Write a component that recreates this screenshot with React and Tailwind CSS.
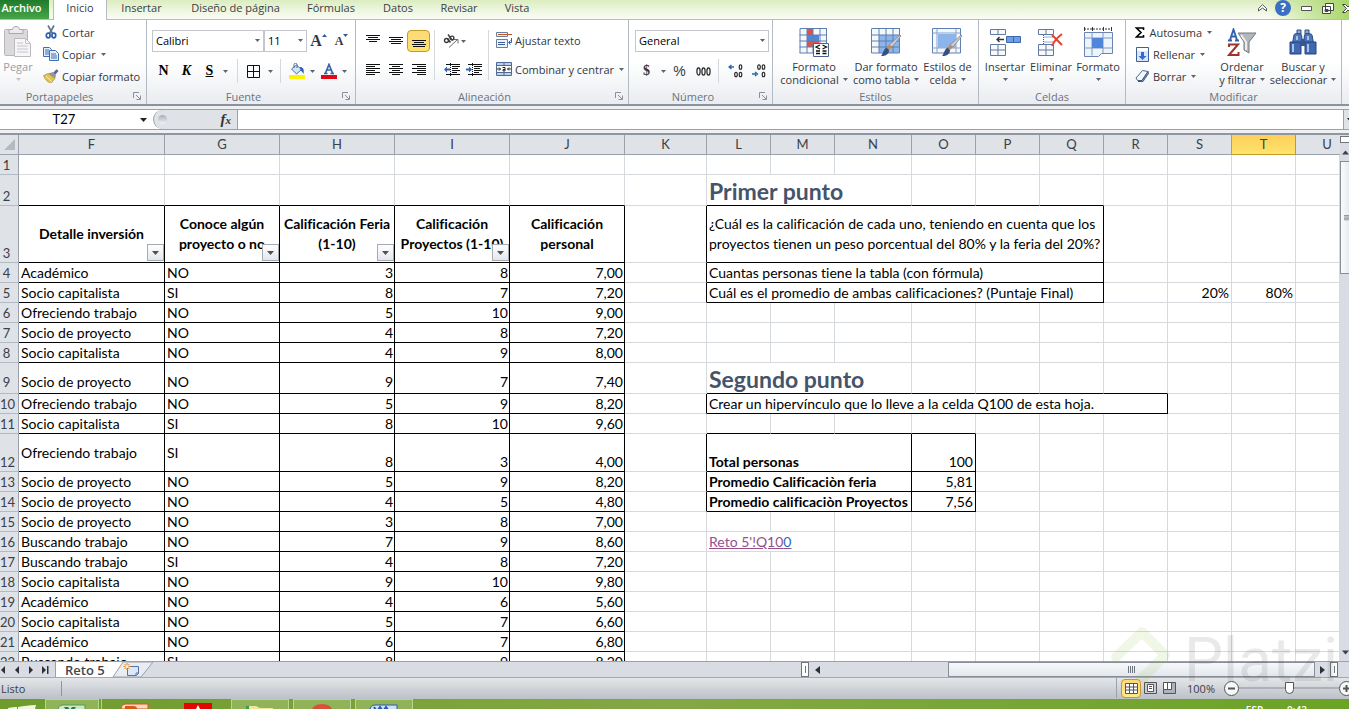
import React from "react";

/* ---------- small shared pieces ---------- */

function Caret({ dark, pale }) {
  return (
    <svg className="block shrink-0" width="5" height="3" viewBox="0 0 5 3">
      <path d="M0 0h5L2.5 3z" fill={dark ? "#1f2329" : pale ? "#c3c5c9" : "#5d646d"} />
    </svg>
  );
}

function Sep() {
  return <span className="h-6 w-px shrink-0 bg-[#d5d8dd]" />;
}

function Launcher({ name }) {
  return (
    <button aria-label={name} className="flex h-3 w-3 items-center justify-center">
      <svg width="8" height="8" viewBox="0 0 8 8" fill="none" stroke="#8a909a">
        <path d="M.5 6V.5H6M3 3l4 4M7.5 3.5v4h-4" />
      </svg>
    </button>
  );
}

function Group({ label, launcher, width, labelPad = "", children }) {
  return (
    <section className={`flex shrink-0 flex-col border-r border-[#b4bac3] ${width}`}>
      <div className="flex h-[69px] w-full">{children}</div>
      <div className={`flex h-4 items-center ${launcher ? "pr-[3px]" : ""}`}>
        <span className={`flex-1 text-center text-[#6a7380] ${labelPad}`}>{label}</span>
        {launcher && <Launcher name={`Opciones de ${label}`} />}
      </div>
    </section>
  );
}

function Tool({ name, width = "w-[23px]", active, children }) {
  return (
    <button
      aria-label={name}
      className={`flex h-[22px] shrink-0 items-center justify-center ${width} ${
        active ? "rounded-sm border border-[#c29b29] bg-linear-to-b from-[#fdd978] to-[#ffe26a]" : ""
      }`}
    >
      {children}
    </button>
  );
}

function BigButton({ icon, lines, width, below, muted }) {
  return (
    <button className={`flex shrink-0 flex-col items-center pt-1 ${width} ${muted ? "text-[#9a9ea4]" : ""}`}>
      <span className="flex h-9 items-center">{icon}</span>
      <span className="block h-[13px] leading-[13px] whitespace-nowrap">{lines[0]}</span>
      <span className="flex h-[13px] items-center gap-1 leading-[13px] whitespace-nowrap">
        {!below && lines[1]}
        <Caret pale={muted} />
      </span>
    </button>
  );
}

function SmallButton({ icon, label, caret }) {
  return (
    <button className="flex h-[22px] items-center gap-[3px] pb-[2px] whitespace-nowrap">
      <span className="flex w-4 justify-center">{icon}</span>
      {label}
      {caret && <span className="pl-[2px]"><Caret /></span>}
    </button>
  );
}

function Combo({ label, options, width }) {
  return (
    <span className={`relative flex h-[22px] shrink-0 ${width}`}>
      <select
        aria-label={label}
        className="h-full w-full appearance-none border border-[#c3c7cd] bg-white pr-3 pb-[2px] pl-[3px] text-black outline-none"
      >
        {options.map((o) => (
          <option key={o}>{o}</option>
        ))}
      </select>
      <span className="pointer-events-none absolute top-[9px] right-1">
        <Caret />
      </span>
    </span>
  );
}

/* ---------- ribbon icons ---------- */

const PasteIcon = () => (
  <svg width="28" height="32" viewBox="0 0 28 32">
    <rect x=".5" y="3.5" width="23" height="26" rx="1" fill="#dcd9dd" stroke="#b9b6bb" />
    <path d="M5 3.5h3.5c0-4 7-4 7 0H19v4H5z" fill="#eceaed" stroke="#a9a7ac" />
    <path d="M10.500 12.500h11l5 5v13h-16z" fill="#f6f5f7" stroke="#bcbabf" />
    <path d="M21.500 12.500v5h5M13 17h6M13 20h11M13 23h11M13 26h11" fill="none" stroke="#c6c4c9" />
  </svg>
);
const CutIcon = () => (
  <svg width="12" height="14" viewBox="0 0 12 14" fill="none">
    <path d="M3 .5 7.500 8.500M9 .5 4.500 8.500" stroke="#61748f" strokeWidth="1.600" />
    <ellipse cx="3.200" cy="10.500" rx="1.900" ry="2.300" stroke="#2a5cb0" strokeWidth="1.700" />
    <ellipse cx="8.800" cy="10.500" rx="1.900" ry="2.300" stroke="#2a5cb0" strokeWidth="1.700" />
  </svg>
);
const CopyIcon = () => (
  <svg width="16" height="14" viewBox="0 0 16 14" stroke="#3f6db0">
    <path d="M.5.5h6l2 2v7h-8z" fill="#e4effb" />
    <path d="M2 3h4M2 5h4M2 7h4" />
    <path d="M6.500 3.500h6l3 3v7h-9z" fill="#e4effb" />
    <path d="M8 7h5M8 9h6M8 11h6" />
  </svg>
);
const BrushIcon = () => (
  <svg width="16" height="14" viewBox="0 0 16 14">
    <path d="m10 4 3.500-3.800 2 1.800L12 6z" fill="#6d5a96" />
    <path d="m5 4.500 5-1.500 3 3.500-1 3z" fill="#8d97a6" />
    <path d="M.5 6.500 5 4.500l7 5-3.500 4.200c-3 .3-6-2.200-8-7.200z" fill="#e6c34f" stroke="#a98522" strokeWidth=".6" />
    <path d="M3 7.500c2 1 4 3 5 5" stroke="#fbeeb4" fill="none" />
  </svg>
);
const BordersIcon = () => (
  <svg width="13" height="13" viewBox="0 0 13 13" fill="none" stroke="#111">
    <path d="M.5.5h12v12H.5zM6.500.5v12M.5 6.500h12" />
  </svg>
);
const BucketIcon = () => (
  <svg width="16" height="16" viewBox="0 0 16 16">
    <rect y="12" width="16" height="4" fill="#fff200" />
    <path d="m2.500 6 5-4 5 4.500-5 4.500z" fill="#d4e4f5" stroke="#4a6fa5" />
    <path d="M5 5V1.500C5-.2 8-.2 8 1.500V5" fill="none" stroke="#556a88" />
    <path d="M11 4c3 0 4.500 2.500 3.500 7-1-2-2-3-3-3.500z" fill="#2f62b3" />
  </svg>
);
const FontColorIcon = () => (
  <svg width="16" height="16" viewBox="0 0 16 16">
    <rect y="12" width="16" height="4" fill="#e30613" />
    <path d="M3 10.500h3.500M9.500 10.500H13M4.500 10 8 1.500l3.500 8.500M6 7h4.500" fill="none" stroke="#3a62a8" strokeWidth="1.700" />
  </svg>
);

function Lines({ rows }) {
  return (
    <svg width="14" height="14" viewBox="0 0 14 14" stroke="#111" fill="none">
      <path d={rows} />
    </svg>
  );
}
const TOP = "M0 1.500h14M2 3.500h10M0 5.500h14M3 7.500h8";
const MID = "M0 3.500h14M2 5.500h10M0 7.500h14M2 9.500h10";
const BOT = "M0 6.500h14M2 8.500h10M0 10.500h14M1 12.500h12";
const LEFT = "M0 1.500h14M0 3.500h9M0 5.500h14M0 7.500h9M0 9.500h14M0 11.500h9";
const CENTER = "M0 1.500h14M3 3.500h8M0 5.500h14M3 7.500h8M0 9.500h14M3 11.500h8";
const RIGHT = "M0 1.500h14M5 3.500h9M0 5.500h14M5 7.500h9M0 9.500h14M5 11.500h9";

const AngleIcon = () => (
  <svg width="16" height="14" viewBox="0 0 16 14" fill="none" stroke="#3a3a3a">
    <circle cx="3.500" cy="6.500" r="2" strokeWidth="1.400" />
    <path d="m4.500 4.500 3 4M5 .5l4.500 6" strokeWidth="1.400" />
    <circle cx="9" cy="4" r="1.900" strokeWidth="1.400" />
    <path d="m6 13.500 8-7.500M15 9.500V5.500h-4" stroke="#6c6c6c" />
  </svg>
);
function IndentIcon({ inward }) {
  return (
    <svg width="16" height="14" viewBox="0 0 16 14" fill="none">
      <path d="M2 1.500h14M8 3.500h8M8 5.500h6M8 7.500h8M8 9.500h5M2 11.500h14" stroke="#111" />
      <path d="M6.500 0v14" stroke="#111" strokeDasharray="1 1" />
      <path d={inward ? "M0 5.500h3v-2l3 3-3 3v-2H0z" : "M6 5.500H3v-2l-3 3 3 3v-2h3z"} fill="#2f62b3" />
    </svg>
  );
}
const WrapIcon = () => (
  <svg width="16" height="16" viewBox="0 0 16 16" fill="none">
    <path d="M.5.500h11v4H.5zM.5 7.500h11v8H.5z" fill="#eaf1fa" stroke="#6b7f9b" />
    <path d="M2 2.500h14" stroke="#c0562d" />
    <path d="M2 10.500h7M2 12.500h7" stroke="#3d5f96" />
    <path d="M15.500 6v4.500H13M14.500 8.500l-2 2 2 2" stroke="#2f62b3" />
  </svg>
);
const MergeIcon = () => (
  <svg width="16" height="14" viewBox="0 0 16 14" fill="none">
    <path d="M.5.500h15v13H.5z" fill="#b9d0ee" stroke="#4d6a96" />
    <path d="M.5 3.500h15M.5 10.500h15M8 .5v3M8 10.500v3" stroke="#4d6a96" />
    <path d="M1 4h14v6H1z" fill="#fff" />
    <path d="M1 7h3.500M3 5.500 4.500 7 3 8.500M15 7h-3.500M13 5.500 11.500 7 13 8.500" stroke="#222" />
    <path d="M6.500 5.500h2.500V9H7V7.500h2" stroke="#222" />
  </svg>
);

function DecimalIcon({ less }) {
  const arrow = less ? "M1 10h4M4 8l2.500 2L4 12" : "M6 3H2M3.500 1 1 3l2.500 2";
  const zeros = less ? [[8, 3], [12.5, 3], [12.5, 10.5]] : [[12.5, 3], [8, 10.5], [12.5, 10.5]];
  return (
    <svg width="16" height="14" viewBox="0 0 16 14" fill="none">
      <path d={arrow} stroke="#2f62b3" strokeWidth="1.400" />
      {zeros.map(([x, y]) => (
        <ellipse key={`${x}-${y}`} cx={x} cy={y} rx="1.300" ry="2.300" stroke="#222" strokeWidth="1.100" />
      ))}
    </svg>
  );
}

const BrushOverlay = () => (
  <g>
    <path d="m30 8-9 11-3-2L29 7z" fill="#c9cdd4" stroke="#777e8a" strokeWidth=".7" />
    <path d="m21 19-3 3-2.500-2.500L18 17z" fill="#c98b4a" />
    <path d="M18 22c0 4-3 6-8 6 2-2 2-6 5.500-8.500z" fill="#34527f" />
  </g>
);
const CondIcon = () => (
  <svg width="30" height="29" viewBox="0 0 30 29" fill="none">
    <path d="M1 1h27v24H1z" fill="#f4f8fd" />
    <path d="M8 1h6v12H8zM8 13h12v6H8z" fill="#e0513f" />
    <path d="M8 7h12v6H8z" fill="#4f86dc" />
    <path d="M1 .5h27M.5 7h27M.5 13h27M.5 19h27M.5 25h27M1 .5V25M8 .5V25M14 .5V25M21 .5V25M27.500.5V25" stroke="#5f7fb0" />
    <path d="M14.500 15.500h15v13h-15z" fill="#fff" stroke="#4b638c" />
    <path d="m21 17-4 2 4 2M17 23h4M17 25.500h4M23.500 17l4 2-4 2M23.500 23h4M23.500 25.500h4" stroke="#111" strokeWidth="1.300" />
  </svg>
);
const TableIcon = () => (
  <svg width="31" height="29" viewBox="0 0 31 29" fill="none">
    <path d="M1 1h28v24H1z" fill="#f4f8fd" />
    <path d="M8 7h21v18H8z" fill="#8db5ec" />
    <path d="M1 .5h28M.5 7h28M.5 13h28M.5 19h28M.5 25h28M.5.5V25M8 .5V25M15 .5V25M22 .5V25M28.500.5V25" stroke="#5f7fb0" />
    <BrushOverlay />
  </svg>
);
const StylesIcon = () => (
  <svg width="31" height="29" viewBox="0 0 31 29" fill="none">
    <path d="M.5.5h28V25H.5z" fill="#f4f8fd" stroke="#5f7fb0" />
    <path d="M5 .5V25M24 .5V25M.5 5h28M.5 20h28" stroke="#8aa3c8" />
    <path d="M6 6h18v14H6z" fill="#8db5ec" />
    <BrushOverlay />
  </svg>
);
const InsertIcon = () => (
  <svg width="31" height="27" viewBox="0 0 31 27" fill="none" stroke="#62789c">
    <path d="M.5.500h15v5H.5zM8 .5v5M.5 15.500h15v11H.5zM8 15.500v11M.5 21h15" fill="#f6f9fd" />
    <path d="M16.500 7.500h14v6h-14zM23.500 7.500v6" fill="#6d9fe6" stroke="#3f67ab" />
    <path d="M7 10.500h7M9.500 8 7 10.500 9.500 13" stroke="#333" strokeWidth="1.300" />
  </svg>
);
const DeleteIcon = () => (
  <svg width="26" height="27" viewBox="0 0 26 27" fill="none" stroke="#62789c">
    <path d="M.5.500h15v5H.5zM8 .5v5M.5 15.500h15v11H.5zM8 15.500v11M.5 21h15" fill="#f6f9fd" />
    <path d="M5.500 6v9M15.500 8H6M15.500 13H6" stroke="#3457a3" strokeDasharray="1 1" />
    <path d="m14 6 10 10M24 5C20 8 16 12 14 17" stroke="#e0442e" strokeWidth="2" />
  </svg>
);
const FormatIcon = () => (
  <svg width="31" height="30" viewBox="0 0 31 30" fill="none">
    <path d="M1 2h27" stroke="#333" strokeDasharray="2 1" />
    <path d="M1.500 0v4M9.500 0v4M20.500 0v4M28.500 0v4" stroke="#333" />
    <path d="M1.500 5.500h28v21h-11l-3 3h-14z" fill="#eef4fc" stroke="#6a85b2" />
    <path d="M9 5.500v23M20 5.500v21M1.500 11h28M1.500 21h28" stroke="#7f98c2" />
    <path d="M9 11h11v10H9z" fill="#4f86dc" />
  </svg>
);
const SigmaIcon = () => (
  <svg width="10" height="11" viewBox="0 0 10 11" fill="none" stroke="#000" strokeWidth="1.600">
    <path d="M8.500 3V1H1.500L6 5.500 1.500 10h7V8" />
  </svg>
);
const FillIcon = () => (
  <svg width="13" height="15" viewBox="0 0 13 15">
    <path d="M.5.500h12v14H.5z" fill="#d7e6fa" stroke="#3f5f96" />
    <path d="M1 1h11v3H1z" fill="#fff" />
    <path d="M5 5h3v4h2.500l-4 4-4-4H5z" fill="#2f6bd0" />
  </svg>
);
const EraserIcon = () => (
  <svg width="15" height="12" viewBox="0 0 15 12">
    <path d="m1 8 6.500-7.500 5.500 1L7 10.500H2.500z" fill="#f2f6fc" stroke="#4f6691" />
    <path d="m13 1.500.5 2L8 11.500H3l4-1z" fill="#7792c0" stroke="#34496e" strokeWidth=".8" />
  </svg>
);
const SortIcon = () => (
  <svg width="30" height="29" viewBox="0 0 30 29" fill="none">
    <path d="M11 5h18l-7 9v11l-5-3v-8z" fill="#b4b7bb" stroke="#74777b" />
    <path d="m14 7 5 7v8" stroke="#eceded" strokeWidth="2" />
    <path d="M1 12.500h4M8 12.500h4M3 12 6.500 1.500 10 12M4 8.500h5" stroke="#2f62b3" strokeWidth="1.900" />
    <path d="M2 19v-2.500h9L2 27h9.500v-3" stroke="#a0322c" strokeWidth="2" />
  </svg>
);
const FindIcon = () => (
  <svg width="28" height="26" viewBox="0 0 28 26">
    <path d="M8 1h4v4H8zM16 1h4v4h-4z" fill="#8fa9d4" stroke="#304f86" />
    <path d="M5 6c0-2 7-2 7.500 0l1 8h-10zM15.500 6c.5-2 7-2 7.500 0l1.500 8h-10z" fill="#4f76ba" stroke="#2b4a84" />
    <path d="M1 13h11v12H1zM16 13h11v12H16z" fill="#3f68b0" stroke="#25437c" />
    <path d="M12 10h4v7h-4z" fill="#37598f" />
    <path d="M4 15v8M19 15v8M8 7v4M19 7v4" stroke="#a9c2ea" strokeWidth="2" />
  </svg>
);

/* ---------- ribbon ---------- */

const TABS = [
  ["Insertar", "w-[69px]"],
  ["Diseño de página", "w-[119px]"],
  ["Fórmulas", "w-[72px]"],
  ["Datos", "w-[62px]"],
  ["Revisar", "w-[60px]"],
  ["Vista", "w-[56px]"],
];

function TabBar() {
  return (
    <nav className="flex h-5 shrink-0 border-b border-[#b7bcc2] bg-linear-to-b from-[#dcedc0] to-[#fbfdf6] text-[#3b4047]">
      <button className="h-[19px] w-[49px] shrink-0 bg-linear-to-b from-[#1f7a2c] to-[#46a648] pr-[6px] pb-1 font-semibold text-white">
        Archivo
      </button>
      <button className="ml-1 h-5 w-[54px] shrink-0 border-x border-[#b7bcc2] bg-white pb-[5px]">Inicio</button>
      {TABS.map(([t, w]) => (
        <button key={t} className={`shrink-0 pb-1 whitespace-nowrap ${w}`}>
          {t}
        </button>
      ))}
      <span className="flex flex-1 items-center justify-end gap-2 bg-linear-to-l from-[#a8d66a] to-transparent to-10% pb-[3px]">
        <button aria-label="Minimizar la cinta">
          <svg width="9" height="8" viewBox="0 0 9 8" fill="none" stroke="#555">
            <path d="M.5 4.500 4.500.7l4 3.800v2.500L4.500 4 .5 7z" fill="#fff" />
          </svg>
        </button>
        <button
          aria-label="Ayuda"
          className="flex h-4 w-4 items-center justify-center rounded-full bg-[#3c6fc4] text-xs font-bold text-white"
        >
          ?
        </button>
        <button aria-label="Minimizar" className="ml-[2px]">
          <svg width="11" height="5" viewBox="0 0 11 5"><path d="M.5.500h10v4H.5z" fill="#fff" stroke="#555" /></svg>
        </button>
        <button aria-label="Restaurar" className="ml-[2px]">
          <svg width="12" height="11" viewBox="0 0 12 11" fill="#fff" stroke="#444">
            <path d="M3.500.500h8v7h-8zM.5 3.500h8v7h-8zM3 6.500h3v2H3z" />
          </svg>
        </button>
        <button aria-label="Cerrar" className="w-[7px] overflow-hidden">
          <svg className="max-w-none" width="12" height="9" viewBox="0 0 12 9" fill="#fff" stroke="#444">
            <path d="M.5.500h3l2.500 2.500L8.500.500h3l-4 4 4 4h-3L6 6 3.500 8.500h-3l4-4z" />
          </svg>
        </button>
      </span>
    </nav>
  );
}

function Ribbon() {
  return (
    <div className="flex h-[86px] shrink-0 overflow-hidden border-b-2 border-[#8b929c] bg-linear-to-b from-white from-50% to-[#e9ecf0] text-[#34383e]">
      <Group label="Portapapeles" launcher width="w-[147px]" labelPad="pr-3">
        <BigButton icon={<PasteIcon />} lines={["Pegar"]} below muted width="w-9" />
        <div className="flex flex-col pt-[2px] pl-[7px]">
          <SmallButton icon={<CutIcon />} label="Cortar" />
          <SmallButton icon={<CopyIcon />} label="Copiar" caret />
          <SmallButton icon={<BrushIcon />} label="Copiar formato" />
        </div>
      </Group>

      <Group label="Fuente" launcher width="w-[209px]">
        <div className="flex w-full flex-col gap-[7px] pt-[10px] pl-[5px]">
          <div className="flex">
            <Combo label="Fuente" options={["Calibri", "Arial", "Cambria"]} width="w-[112px]" />
            <Combo label="Tamaño de fuente" options={["11", "12", "14"]} width="w-[43px]" />
            <Tool name="Aumentar tamaño">
              <span className="font-['Liberation_Serif',serif] text-base leading-none font-bold">A</span>
              <svg className="mb-3" width="5" height="3" viewBox="0 0 5 3"><path d="M0 3h5L2.500 0z" fill="#2f5b9c" /></svg>
            </Tool>
            <Tool name="Disminuir tamaño">
              <span className="font-['Liberation_Serif',serif] text-xs leading-none font-bold">A</span>
              <svg className="mb-3" width="5" height="3" viewBox="0 0 5 3"><path d="M0 0h5L2.500 3z" fill="#2f5b9c" /></svg>
            </Tool>
          </div>
          <div className="flex items-center font-['Liberation_Serif',serif] text-sm font-bold text-black">
            <Tool name="Negrita">N</Tool>
            <Tool name="Cursiva"><i>K</i></Tool>
            <Tool name="Subrayado"><u>S</u></Tool>
            <Tool name="Más subrayados" width="w-2"><Caret /></Tool>
            <span className="w-2" />
            <Sep />
            <span className="w-1" />
            <Tool name="Bordes"><BordersIcon /></Tool>
            <Tool name="Más bordes" width="w-[10px]"><Caret /></Tool>
            <span className="w-[5px]" />
            <Sep />
            <span className="w-1" />
            <Tool name="Color de relleno"><BucketIcon /></Tool>
            <Tool name="Más rellenos" width="w-[9px]"><Caret /></Tool>
            <Tool name="Color de fuente"><FontColorIcon /></Tool>
            <Tool name="Más colores" width="w-[9px]"><Caret /></Tool>
          </div>
        </div>
      </Group>

      <Group label="Alineación" launcher width="w-[273px]">
        <div className="flex gap-1 pt-[10px] pl-[5px]">
          <div className="flex flex-col gap-[7px]">
            <div className="flex">
              <Tool name="Alinear arriba"><Lines rows={TOP} /></Tool>
              <Tool name="Alinear en medio"><Lines rows={MID} /></Tool>
              <Tool name="Alinear abajo" active><Lines rows={BOT} /></Tool>
            </div>
            <div className="flex">
              <Tool name="Izquierda"><Lines rows={LEFT} /></Tool>
              <Tool name="Centrar"><Lines rows={CENTER} /></Tool>
              <Tool name="Derecha"><Lines rows={RIGHT} /></Tool>
            </div>
          </div>
          <span className="h-[50px] w-px bg-[#d5d8dd]" />
          <div className="flex w-[45px] flex-col gap-[7px] pl-1">
            <button aria-label="Orientación" className="flex h-[22px] items-center gap-[2px]">
              <AngleIcon />
              <Caret />
            </button>
            <div className="flex gap-[5px]">
              <Tool name="Disminuir sangría" width="w-[17px]"><IndentIcon /></Tool>
              <Tool name="Aumentar sangría" width="w-[17px]"><IndentIcon inward /></Tool>
            </div>
          </div>
          <span className="h-[50px] w-px bg-[#d5d8dd]" />
          <div className="flex flex-col gap-[7px] pl-[3px]">
            <SmallButton icon={<WrapIcon />} label="Ajustar texto" />
            <SmallButton icon={<MergeIcon />} label="Combinar y centrar" caret />
          </div>
        </div>
      </Group>

      <Group label="Número" launcher width="w-[144px]">
        <div className="flex w-full flex-col gap-[7px] pt-[10px] pl-[6px]">
          <Combo label="Formato de número" options={["General", "Número", "Moneda"]} width="w-[134px]" />
          <div className="flex items-center">
            <Tool name="Moneda"><b className="font-['Liberation_Serif',serif] text-sm">$</b></Tool>
            <Tool name="Más monedas" width="w-[10px]"><Caret /></Tool>
            <Tool name="Porcentaje"><span className="font-['Liberation_Sans',sans-serif] text-sm">%</span></Tool>
            <Tool name="Millares" width="w-6">
              <svg width="15" height="9" viewBox="0 0 15 9" fill="none" stroke="#222" strokeWidth="1.200">
                <ellipse cx="2.500" cy="4.500" rx="1.600" ry="3.600" />
                <ellipse cx="7.500" cy="4.500" rx="1.600" ry="3.600" />
                <ellipse cx="12.500" cy="4.500" rx="1.600" ry="3.600" />
              </svg>
            </Tool>
            <span className="w-[3px]" />
            <Sep />
            <span className="w-[5px]" />
            <Tool name="Aumentar decimales"><DecimalIcon /></Tool>
            <Tool name="Disminuir decimales"><DecimalIcon less /></Tool>
          </div>
        </div>
      </Group>

      <Group label="Estilos" width="w-[206px]">
        <BigButton icon={<CondIcon />} lines={["Formato", "condicional"]} width="w-[82px]" />
        <BigButton icon={<TableIcon />} lines={["Dar formato", "como tabla"]} width="w-[62px]" />
        <BigButton icon={<StylesIcon />} lines={["Estilos de", "celda"]} width="w-[61px]" />
      </Group>

      <Group label="Celdas" width="w-[147px]">
        <BigButton icon={<InsertIcon />} lines={["Insertar"]} below width="w-[52px]" />
        <BigButton icon={<DeleteIcon />} lines={["Eliminar"]} below width="w-[40px]" />
        <BigButton icon={<FormatIcon />} lines={["Formato"]} below width="w-[54px]" />
      </Group>

      <Group label="Modificar" width="w-[216px]">
        <div className="flex w-[86px] shrink-0 flex-col pt-[2px] pl-2">
          <SmallButton icon={<SigmaIcon />} label="Autosuma" caret />
          <SmallButton icon={<FillIcon />} label="Rellenar" caret />
          <SmallButton icon={<EraserIcon />} label="Borrar" caret />
        </div>
        <BigButton icon={<SortIcon />} lines={["Ordenar", "y filtrar"]} width="w-[60px]" />
        <BigButton icon={<FindIcon />} lines={["Buscar y", "seleccionar"]} width="w-[62px]" />
      </Group>
    </div>
  );
}

function FormulaBar() {
  return (
    <div className="flex h-[29px] shrink-0 border-b-2 border-[#8f969f] bg-[#eef0f3] pt-[3px] pb-[3px]">
      <div className="flex w-full border-y border-[#9aa1aa] bg-white">
        <label className="flex w-[153px] shrink-0 items-center">
          <input
            aria-label="Cuadro de nombres"
            defaultValue="T27"
            className="w-[128px] bg-transparent text-center font-['Lato',sans-serif] text-[13px] text-black outline-none"
          />
          <svg className="ml-3" width="7" height="4" viewBox="0 0 7 4"><path d="M0 0h7L3.500 4z" fill="#222" /></svg>
        </label>
        <div className="flex w-[85px] shrink-0 items-center justify-between rounded-l-full border-r border-l border-[#9aa1aa] bg-[#dfe2e7] pr-[6px] pl-1">
          <span className="h-[9px] w-[9px] rounded-full bg-linear-to-b from-[#a9afb7] to-[#f2f4f6]" />
          <button aria-label="Insertar función" className="font-['Liberation_Serif',serif] text-[15px] leading-none font-bold text-[#333] italic">
            f<span className="text-[11px]">x</span>
          </button>
        </div>
        <input aria-label="Barra de fórmulas" className="min-w-0 flex-1 bg-white px-1 outline-none" />
        <button aria-label="Expandir" className="flex w-[6px] shrink-0 items-center overflow-hidden border-l border-[#9aa1aa] bg-[#dfe2e7] pl-[3px]">
          <Caret dark />
        </button>
      </div>
    </div>
  );
}

/* ---------- sheet ---------- */

const COLS = [
  ["F", "w-[146px]"],
  ["G", "w-[115px]"],
  ["H", "w-[115px]"],
  ["I", "w-[115px]"],
  ["J", "w-[115px]"],
  ["K", "w-[82px]"],
  ["L", "w-[64px]"],
  ["M", "w-[64px]"],
  ["N", "w-[77px]"],
  ["O", "w-[64px]"],
  ["P", "w-[64px]"],
  ["Q", "w-[64px]"],
  ["R", "w-[64px]"],
  ["S", "w-[64px]"],
  ["T", "w-[64px]"],
  ["U", ""],
];
const ORDER = COLS.map(([c]) => c);

const PEOPLE = {
  4: ["Académico", "NO", "3", "8", "7,00"],
  5: ["Socio capitalista", "SI", "8", "7", "7,20"],
  6: ["Ofreciendo trabajo", "NO", "5", "10", "9,00"],
  7: ["Socio de proyecto", "NO", "4", "8", "7,20"],
  8: ["Socio capitalista", "NO", "4", "9", "8,00"],
  9: ["Socio de proyecto", "NO", "9", "7", "7,40"],
  10: ["Ofreciendo trabajo", "NO", "5", "9", "8,20"],
  11: ["Socio capitalista", "SI", "8", "10", "9,60"],
  12: ["Ofreciendo trabajo", "SI", "8", "3", "4,00"],
  13: ["Socio de proyecto", "NO", "5", "9", "8,20"],
  14: ["Socio de proyecto", "NO", "4", "5", "4,80"],
  15: ["Socio de proyecto", "NO", "3", "8", "7,00"],
  16: ["Buscando trabajo", "NO", "7", "9", "8,60"],
  17: ["Buscando trabajo", "SI", "4", "8", "7,20"],
  18: ["Socio capitalista", "NO", "9", "10", "9,80"],
  19: ["Académico", "NO", "4", "6", "5,60"],
  20: ["Socio capitalista", "NO", "5", "7", "6,60"],
  21: ["Académico", "NO", "6", "7", "6,80"],
  22: ["Buscando trabajo", "SI", "8", "9", "8,20"],
};

const HEADERS = {
  F: ["Detalle inversión"],
  G: ["Conoce algún", "proyecto o no"],
  H: ["Calificación Feria", "(1-10)"],
  I: ["Calificación", "Proyectos (1-10)"],
  J: ["Calificación", "personal"],
};

/* Cells on the right side of the sheet; span = columns covered, box = black outline. */
const NOTES = {
  2: { L: { span: 3, title: true, text: "Primer punto" } },
  3: {
    L: {
      span: 6,
      box: true,
      wrap: true,
      text: "¿Cuál es la calificación de cada uno, teniendo en cuenta que los proyectos tienen un peso porcentual del 80% y la feria del 20%?",
    },
  },
  4: { L: { span: 6, box: true, text: "Cuantas personas tiene la tabla (con fórmula)" } },
  5: {
    L: { span: 6, box: true, text: "Cuál es el promedio de ambas calificaciones? (Puntaje Final)" },
    S: { right: true, text: "20%" },
    T: { right: true, text: "80%" },
  },
  9: { L: { span: 3, title: true, text: "Segundo punto" } },
  10: { L: { span: 7, box: true, text: "Crear un hipervínculo que lo lleve a la celda Q100 de esta hoja." } },
  12: { L: { span: 3, box: true, bold: true, text: "Total personas" }, O: { box: true, right: true, text: "100" } },
  13: { L: { span: 3, box: true, bold: true, text: "Promedio Calificaciòn feria" }, O: { box: true, right: true, text: "5,81" } },
  14: { L: { span: 3, box: true, bold: true, text: "Promedio calificaciòn Proyectos" }, O: { box: true, right: true, text: "7,56" } },
  16: { L: { span: 2, link: true, text: "Reto 5'!Q100" } },
};

const HEIGHTS = { 2: "h-[31px]", 3: "h-[57px]", 9: "h-[31px]", 12: "h-[38px]" };
const ROWS = Array.from({ length: 22 }, (_, i) => i + 1);

const spanCovers = (row, col) => {
  const notes = NOTES[row] || {};
  return Object.entries(notes).some(([start, n]) => {
    const s = ORDER.indexOf(start);
    const i = ORDER.indexOf(col);
    return n.box && i >= s && i < s + (n.span || 1);
  });
};

function FilterButton({ col }) {
  return (
    <button
      aria-label={`Filtrar columna ${col}`}
      className="absolute right-0 bottom-px flex h-[17px] w-[17px] items-center justify-center border border-[#a6abb2] bg-linear-to-b from-white to-[#e3e7ec]"
    >
      <svg width="7" height="4" viewBox="0 0 7 4"><path d="M0 0h7L3.500 4z" fill="#4c5158" /></svg>
    </button>
  );
}

function NoteText({ note }) {
  if (note.title) return <h2 className="text-[23px] leading-7 font-bold text-[#44546a]">{note.text}</h2>;
  if (note.link)
    return (
      <a href="#Q100" className="text-[#954f8b] underline">
        {note.text.slice(0, -1)}
        <span className="text-[#1f6fb5]">{note.text.slice(-1)}</span>
      </a>
    );
  return note.text;
}

function SheetRow({ n }) {
  const notes = NOTES[n] || {};
  const lift = n === 9 ? "pb-[2px]" : "";
  const cells = [];
  for (let i = 0; i < ORDER.length; i++) {
    const col = ORDER[i];
    if (i < 5) {
      if (n < 3) {
        cells.push(
          <td key={col} className={`border-r border-b border-r-[#d6d9de] ${n === 2 ? "border-b-black" : "border-b-[#d6d9de]"}`} />
        );
      } else if (n === 3) {
        cells.push(
          <th key={col} scope="col" className="relative border-r border-b border-black p-0 align-middle leading-5 font-bold whitespace-nowrap">
            {HEADERS[col].map((t) => (
              <span key={t} className="block">{t}</span>
            ))}
            {i < 4 && <FilterButton col={col} />}
          </th>
        );
      } else {
        cells.push(
          <td
            key={col}
            className={`border-r border-b border-black py-0 pl-[2px] leading-[18px] ${lift} ${
              i > 1 ? "pr-px text-right align-bottom" : n === 12 ? "pr-[2px] align-middle" : "pr-[2px] align-bottom"
            }`}
          >
            {PEOPLE[n][i]}
          </td>
        );
      }
      continue;
    }
    const note = notes[col];
    const span = note?.span || 1;
    const last = ORDER[i + span - 1];
    const next = ORDER[i + span];
    const blackRight = note?.box || (next && notes[next]?.box);
    const blackBottom = note?.box || spanCovers(n + 1, col);
    cells.push(
      <td
        key={`${col}-${last}`}
        colSpan={span}
        className={`border-r border-b p-0 px-[2px] ${
          note?.wrap ? "align-middle leading-5" : "align-bottom leading-[18px] whitespace-nowrap"
        } ${blackRight ? "border-r-black" : "border-r-[#d6d9de]"} ${blackBottom ? "border-b-black" : "border-b-[#d6d9de]"} ${
          note?.bold ? "font-bold" : ""
        } ${note?.right ? "text-right" : ""}`}
      >
        {note && <NoteText note={note} />}
      </td>
    );
    i += span - 1;
  }
  return (
    <tr className={HEIGHTS[n] || "h-5"}>
      <th
        scope="row"
        className={`border-r border-b border-r-[#9aa1aa] border-b-[#b4bac3] bg-[#dfe2e7] py-0 pr-[5px] pl-0 text-center align-bottom text-[13px] leading-[18px] font-normal text-[#3a4048] ${lift}`}
      >
        {n}
      </th>
      {cells}
    </tr>
  );
}

function Sheet() {
  return (
    <div className="flex min-h-0 flex-1">
      <div className="min-w-0 flex-1 overflow-hidden bg-white">
        <table className="w-full table-fixed border-separate border-spacing-0 font-['Lato','Carlito',sans-serif] text-sm text-black [font-variant-ligatures:none]">
          <colgroup>
            <col className="w-[19px]" />
            {COLS.map(([c, w]) => (
              <col key={c} className={w} />
            ))}
          </colgroup>
          <thead>
            <tr className="h-5">
              <th className="border-r border-b border-[#9aa1aa] bg-[#dfe2e7] p-0">
                <svg className="ml-1" width="11" height="11" viewBox="0 0 12 12"><path d="M12 0v12H0z" fill="#b5bac2" /></svg>
              </th>
              {COLS.map(([c]) => (
                <th
                  key={c}
                  scope="col"
                  className={`border-r border-b p-0 text-[13px] leading-[19px] font-normal text-[#3a4048] ${
                    c === "T"
                      ? "border-[#c29b29] bg-linear-to-b from-[#fbd05a] to-[#ffe36c]"
                      : "border-[#9aa1aa] bg-[#dfe2e7]"
                  } ${c === "U" ? "border-r-0 pl-[18px]" : ""}`}
                >
                  {c}
                </th>
              ))}
            </tr>
          </thead>
          <tbody>
            {ROWS.map((n) => (
              <SheetRow key={n} n={n} />
            ))}
          </tbody>
        </table>
      </div>
      <div className="flex w-[9px] shrink-0 flex-col items-end overflow-hidden bg-[#d9dde3]">
        <div className="mt-[1px] h-[7px] w-full border border-r-0 border-[#6f757e] bg-white" />
        <button aria-label="Subir" className="flex h-[18px] w-full items-center pl-[2px]">
          <svg className="max-w-none" width="9" height="5" viewBox="0 0 9 5"><path d="M0 5h9L4.500 0z" fill="#3a4048" /></svg>
        </button>
        <div className="flex h-[113px] w-full items-center border border-r-0 border-[#878e98] bg-linear-to-r from-[#fafbfc] to-[#e8ebef] pl-[3px]">
          <svg className="max-w-none" width="7" height="8" viewBox="0 0 7 8" stroke="#6f757e"><path d="M0 .5h7M0 2.500h7M0 4.500h7M0 6.500h7" /></svg>
        </div>
        <div className="flex-1" />
        <button aria-label="Bajar" className="flex h-[18px] w-full items-center pl-[2px]">
          <svg className="max-w-none" width="9" height="5" viewBox="0 0 9 5"><path d="M0 0h9L4.500 5z" fill="#3a4048" /></svg>
        </button>
      </div>
    </div>
  );
}

/* ---------- bottom bars ---------- */

function Nav({ name, d }) {
  return (
    <button aria-label={name} className="flex w-[14px] items-center justify-center">
      <svg width="8" height="8" viewBox="0 0 8 8" fill="#2c3138"><path d={d} /></svg>
    </button>
  );
}

function SheetTabs() {
  return (
    <div className="flex h-4 shrink-0 border-t border-[#9aa1aa] bg-[#d9dde3]">
      <div className="flex w-[55px] shrink-0 items-stretch overflow-hidden">
        <span className="-ml-1 flex">
          <Nav name="Primera hoja" d="M6 0v8L2 4z" />
          <Nav name="Hoja anterior" d="M6 0v8L2 4z" />
          <Nav name="Hoja siguiente" d="M2 0v8l4-4z" />
          <Nav name="Última hoja" d="M1 0v8l4-4zM6 0h1.500v8H6z" />
        </span>
      </div>
      <button className="flex shrink-0 items-center border-l border-[#9aa1aa] bg-white pr-1 pl-[9px] text-[13px] leading-4 font-semibold text-[#3f4650]">
        Reto 5
      </button>
      <svg className="shrink-0" width="48" height="15" viewBox="0 0 48 15">
        <path d="M0 0h14L4 15H0z" fill="#fff" />
        <path d="M14 0h30L32 15H4z" fill="#e9ecf0" stroke="#9aa1aa" />
        <path d="M18.500 4.500h11v7l-2 2h-9z" fill="#dbe8f9" stroke="#5573a8" />
        <path d="M27 13v-2h3" fill="none" stroke="#5573a8" />
        <path d="M18 1v7M14.500 4.500h7M15.500 2l5 5M20.500 2l-5 5" stroke="#e08a1e" />
        <circle cx="18" cy="4.500" r="1.500" fill="#fff4c9" />
      </svg>
      <div className="flex-1" />
      <div className="flex w-2 justify-center border border-[#6f757e] bg-white py-[3px]">
        <span className="w-px bg-[#6f757e]" />
      </div>
      <div className="flex w-[530px] shrink-0 items-stretch">
        <button aria-label="Desplazar a la izquierda" className="flex w-[17px] items-center justify-center">
          <svg width="5" height="8" viewBox="0 0 5 8"><path d="M5 0v8L0 4z" fill="#2c3138" /></svg>
        </button>
        <div className="w-[122px]" />
        <div className="flex w-[367px] items-center justify-center border border-[#878e98] bg-linear-to-b from-[#f7f8fa] to-[#e3e7ed]">
          <svg width="8" height="7" viewBox="0 0 8 7" stroke="#6f757e"><path d="M.5 0v7M2.500 0v7M4.500 0v7M6.500 0v7" /></svg>
        </div>
        <button aria-label="Desplazar a la derecha" className="flex w-[15px] items-center justify-center">
          <svg width="5" height="8" viewBox="0 0 5 8"><path d="M0 0v8l5-4z" fill="#2c3138" /></svg>
        </button>
        <div className="flex w-2 justify-center border border-[#6f757e] bg-white py-[3px]">
          <span className="w-px bg-[#6f757e]" />
        </div>
      </div>
      <div className="w-[10px] shrink-0" />
    </div>
  );
}

function StatusBar() {
  return (
    <footer className="flex h-[22px] shrink-0 items-center overflow-hidden border-t border-[#a3a9b2] bg-linear-to-b from-[#e4e6e9] to-[#bcc1c8] pb-px text-[#3a4048]">
      <span className="w-[62px] shrink-0 border-r border-[#8f969f] pl-[1px]">Listo</span>
      <span className="flex-1" />
      <div className="flex h-full shrink-0 items-center border-l border-[#9aa1aa] pl-1">
        <button
          aria-label="Normal"
          className="flex h-[19px] w-5 items-center justify-center rounded-sm border border-[#c29b29] bg-linear-to-b from-[#fdd978] to-[#ffe98a]"
        >
          <svg width="13" height="11" viewBox="0 0 13 11" fill="#fff" stroke="#555">
            <path d="M.5.500h12v10H.5zM4.500.500v10M8.500.500v10M.5 4h12M.5 7h12" />
          </svg>
        </button>
        <Tool name="Diseño de página" width="w-[18px]">
          <svg width="13" height="12" viewBox="0 0 13 12" fill="#c9cdd3" stroke="#555">
            <path d="M.5.500h12v11H.5z" />
            <path d="M3.500 2.500h6v7h-6zM5 4.500h3M5 6.500h3" fill="#fff" />
          </svg>
        </Tool>
        <Tool name="Vista previa de salto" width="w-5">
          <svg width="13" height="12" viewBox="0 0 13 12" fill="#fff" stroke="#555">
            <path d="M.5.500h12v11H.5z" fill="#aeb4bd" />
            <path d="M.5.500h4v7h-4zM4.500.500h4v7h-4z" />
          </svg>
        </Tool>
      </div>
      <button className="w-11 shrink-0 text-center">100%</button>
      <button aria-label="Alejar" className="flex w-4 shrink-0 justify-center">
        <svg width="15" height="15" viewBox="0 0 15 15" fill="#f7f8f9" stroke="#555"><circle cx="7.500" cy="7.500" r="7" /><path d="M4 7.500h7" strokeWidth="2" /></svg>
      </button>
      <input
        aria-label="Zoom"
        type="range"
        min="0"
        max="100"
        defaultValue="50"
        className="h-4 w-[100px] shrink-0 appearance-none bg-linear-to-b from-transparent from-45% via-[#6f757e] via-50% to-transparent to-55% [&::-webkit-slider-thumb]:h-3 [&::-webkit-slider-thumb]:w-[9px] [&::-webkit-slider-thumb]:appearance-none [&::-webkit-slider-thumb]:rounded-b-full [&::-webkit-slider-thumb]:border [&::-webkit-slider-thumb]:border-[#555] [&::-webkit-slider-thumb]:bg-white"
      />
      <button aria-label="Acercar" className="w-[10px] shrink-0 overflow-hidden">
        <svg className="max-w-none" width="15" height="15" viewBox="0 0 15 15" fill="#f7f8f9" stroke="#555"><circle cx="7.500" cy="7.500" r="7" /><path d="M4 7.500h7M7.500 4v7" strokeWidth="2" /></svg>
      </button>
    </footer>
  );
}

function TaskItem({ width, framed, label, children }) {
  return (
    <button
      aria-label={label}
      className={`flex h-[10px] shrink-0 justify-center overflow-hidden pt-1 ${width} ${
        framed ? "border-x border-t border-[#b7d491] bg-[#8fb356]" : ""
      }`}
    >
      <svg width="30" height="6" viewBox="0 0 30 6">{children}</svg>
    </button>
  );
}

function TaskBar() {
  return (
    <div className="flex h-[10px] shrink-0 overflow-hidden bg-linear-to-r from-[#6f9b2c] via-[#84a844] to-[#6ba325]">
      <TaskItem width="w-[45px]" label="Iniciar">
        <path d="M0 6V5c4-1 6-1 9-1v2zM10 4c6-1 11-2 18-2l-1 4H10z" fill="#eef6df" />
      </TaskItem>
      <TaskItem width="w-[54px]" framed label="Excel">
        <path d="M1 6c0-3 2-5 5-5h22v5z" fill="#cfe6c9" stroke="#4f9a5c" />
        <path d="M7 3h4l2 3H9zM15 3h4l-2 3h-4z" fill="#2c7a44" />
      </TaskItem>
      <span className="w-[3px] border-r border-[#b7d491]" />
      <TaskItem width="w-[66px]" label="PowerPoint">
        <path d="M1 6c0-3 2-5 5-5h22v5z" fill="#f6d9c4" stroke="#d4591b" />
        <path d="M5 3h8c3 0 4 1 4 3H5z" fill="#d4591b" />
      </TaskItem>
      <TaskItem width="w-[60px]" label="Acrobat">
        <path d="M1 0h28v6H1z" fill="#e10600" />
        <path d="m15 2 2 4h-4z" fill="#fff" />
      </TaskItem>
      <span className="w-[3px]" />
      <span className="flex gap-1">
        <TaskItem width="w-[58px]" framed label="Explorador">
          <path d="M1 2h10l4 2h13v2H1z" fill="#f3e3a1" />
          <path d="M1 2h3v4H1z" fill="#3d9b49" />
        </TaskItem>
        <TaskItem width="w-[58px]" framed label="Chrome">
          <path d="M5 6a10 6 0 0 1 20 0z" fill="#d9503a" />
        </TaskItem>
        <TaskItem width="w-[58px]" framed label="Word">
          <path d="M1 6c0-3 2-5 5-5h22v5z" fill="#cfe0f6" stroke="#2a5bb0" />
          <path d="m5 3 2 3M9 6l2-3 2 3M15 6l2-3 2 3" fill="none" stroke="#2a5bb0" strokeWidth="2" />
        </TaskItem>
      </span>
      <span className="flex-1" />
      <span className="flex shrink-0 gap-6 pt-[5px] pr-[42px] text-[10px] leading-3 font-semibold text-white">
        <span>ESP</span>
        <span>9:42</span>
      </span>
    </div>
  );
}

function Watermark() {
  return (
    <div className="pointer-events-none absolute right-[11px] bottom-[15px] flex items-center gap-3 opacity-10">
      <svg className="mb-2" width="62" height="60" viewBox="0 0 62 60" fill="none" stroke="#7fb81e" strokeWidth="10" strokeLinejoin="round">
        <path d="M10 34 6 31 32 6l23 23-22 23-4-4" />
      </svg>
      <span className="font-['Roboto',sans-serif] text-[62px] leading-none text-[#333]">Platzi</span>
    </div>
  );
}

export default function App() {
  return (
    <div className="relative flex h-screen w-full flex-col overflow-hidden bg-white font-['Open_Sans','Noto_Sans',sans-serif] text-[11px] leading-[15px]">
      <TabBar />
      <Ribbon />
      <FormulaBar />
      <Sheet />
      <SheetTabs />
      <StatusBar />
      <TaskBar />
      <Watermark />
    </div>
  );
}
